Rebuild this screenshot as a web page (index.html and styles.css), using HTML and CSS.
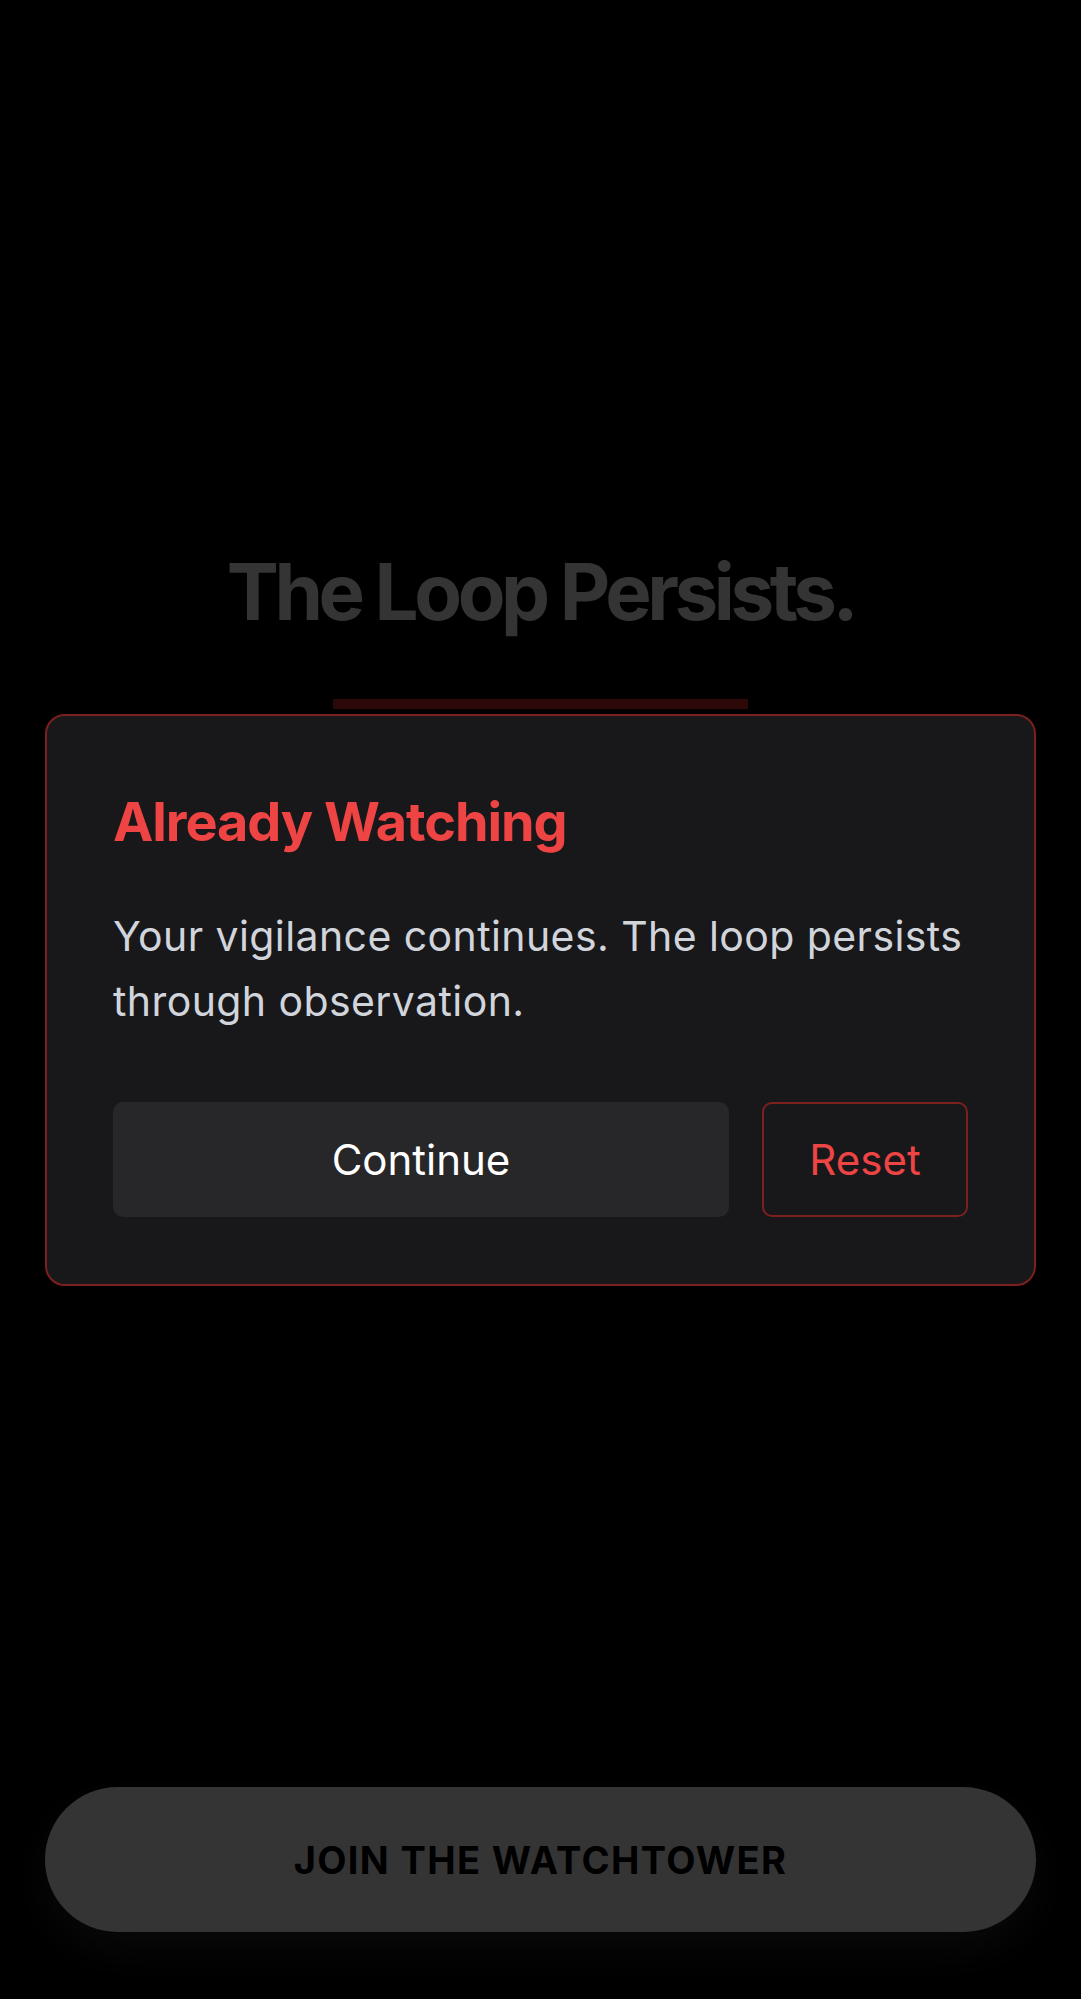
FILE: index.html
```html
<!DOCTYPE html>
<html lang="en">
<head>
<meta charset="utf-8">
<title>The Loop Persists.</title>
<link rel="stylesheet" href="styles.css">
</head>
<body>
<div class="page">
  <main class="hero">
    <h1 class="hero-title">The Loop Persists.</h1>
    <div class="hero-bar"></div>
  </main>
  <footer class="cta-wrap">
    <button class="cta">JOIN THE WATCHTOWER</button>
  </footer>
</div>

<div class="overlay">
  <div class="modal">
    <h2 class="modal-title">Already Watching</h2>
    <p class="modal-text">Your vigilance continues. The loop persists through observation.</p>
    <div class="modal-actions">
      <button class="btn btn-continue">Continue</button>
      <button class="btn btn-reset">Reset</button>
    </div>
  </div>
</div>
</body>
</html>
```

FILE: styles.css
```css
* { box-sizing: border-box; }

html, body {
  margin: 0;
  padding: 0;
  background: #000;
  font-family: Inter, "Noto Sans", "Liberation Sans", sans-serif;
}

.page {
  min-height: 100vh;
  display: flex;
  flex-direction: column;
}

.hero {
  flex: 1;
  display: flex;
  flex-direction: column;
  align-items: center;
  padding-top: 553px;
}

.hero-title {
  margin: 0;
  font-size: 78px;
  line-height: 1;
  font-weight: 700;
  letter-spacing: -0.057em;
  color: #343434;
}

.hero-bar {
  margin-top: 68px;
  width: 415px;
  height: 10px;
  background: #2c0809;
}

.cta-wrap {
  padding: 0 45px 67px;
}

.cta {
  display: block;
  width: 100%;
  height: 145px;
  border: none;
  border-radius: 999px;
  background: #343434;
  color: #000;
  font-family: inherit;
  font-size: 38px;
  font-weight: 700;
  letter-spacing: 0.035em;
  box-shadow: 0 18px 40px rgba(255, 255, 255, 0.035);
}

.overlay {
  position: fixed;
  inset: 0;
  display: flex;
  align-items: center;
  padding: 0 45px;
}

.modal {
  width: 100%;
  background: #18181b;
  border: 2px solid #7c1f1f;
  border-radius: 20px;
  padding: 73px 66px 67px;
}

.modal-title {
  margin: 0;
  font-size: 54px;
  line-height: 65px;
  font-weight: 700;
  color: #ef4444;
  letter-spacing: -0.02em;
}

.modal-text {
  margin: 50px 0 0;
  font-size: 41px;
  line-height: 65px;
  letter-spacing: 0.01em;
  color: #d1d5db;
}

.modal-actions {
  margin-top: 68px;
  display: flex;
  gap: 33px;
}

.btn {
  height: 115px;
  border-radius: 10px;
  font-family: inherit;
  font-size: 42px;
  font-weight: 400;
}

.btn-continue {
  flex: 1;
  border: none;
  background: #27272a;
  color: #fff;
}

.btn-reset {
  width: 206px;
  background: transparent;
  border: 2px solid #7c1f1f;
  color: #ef4444;
}
```
